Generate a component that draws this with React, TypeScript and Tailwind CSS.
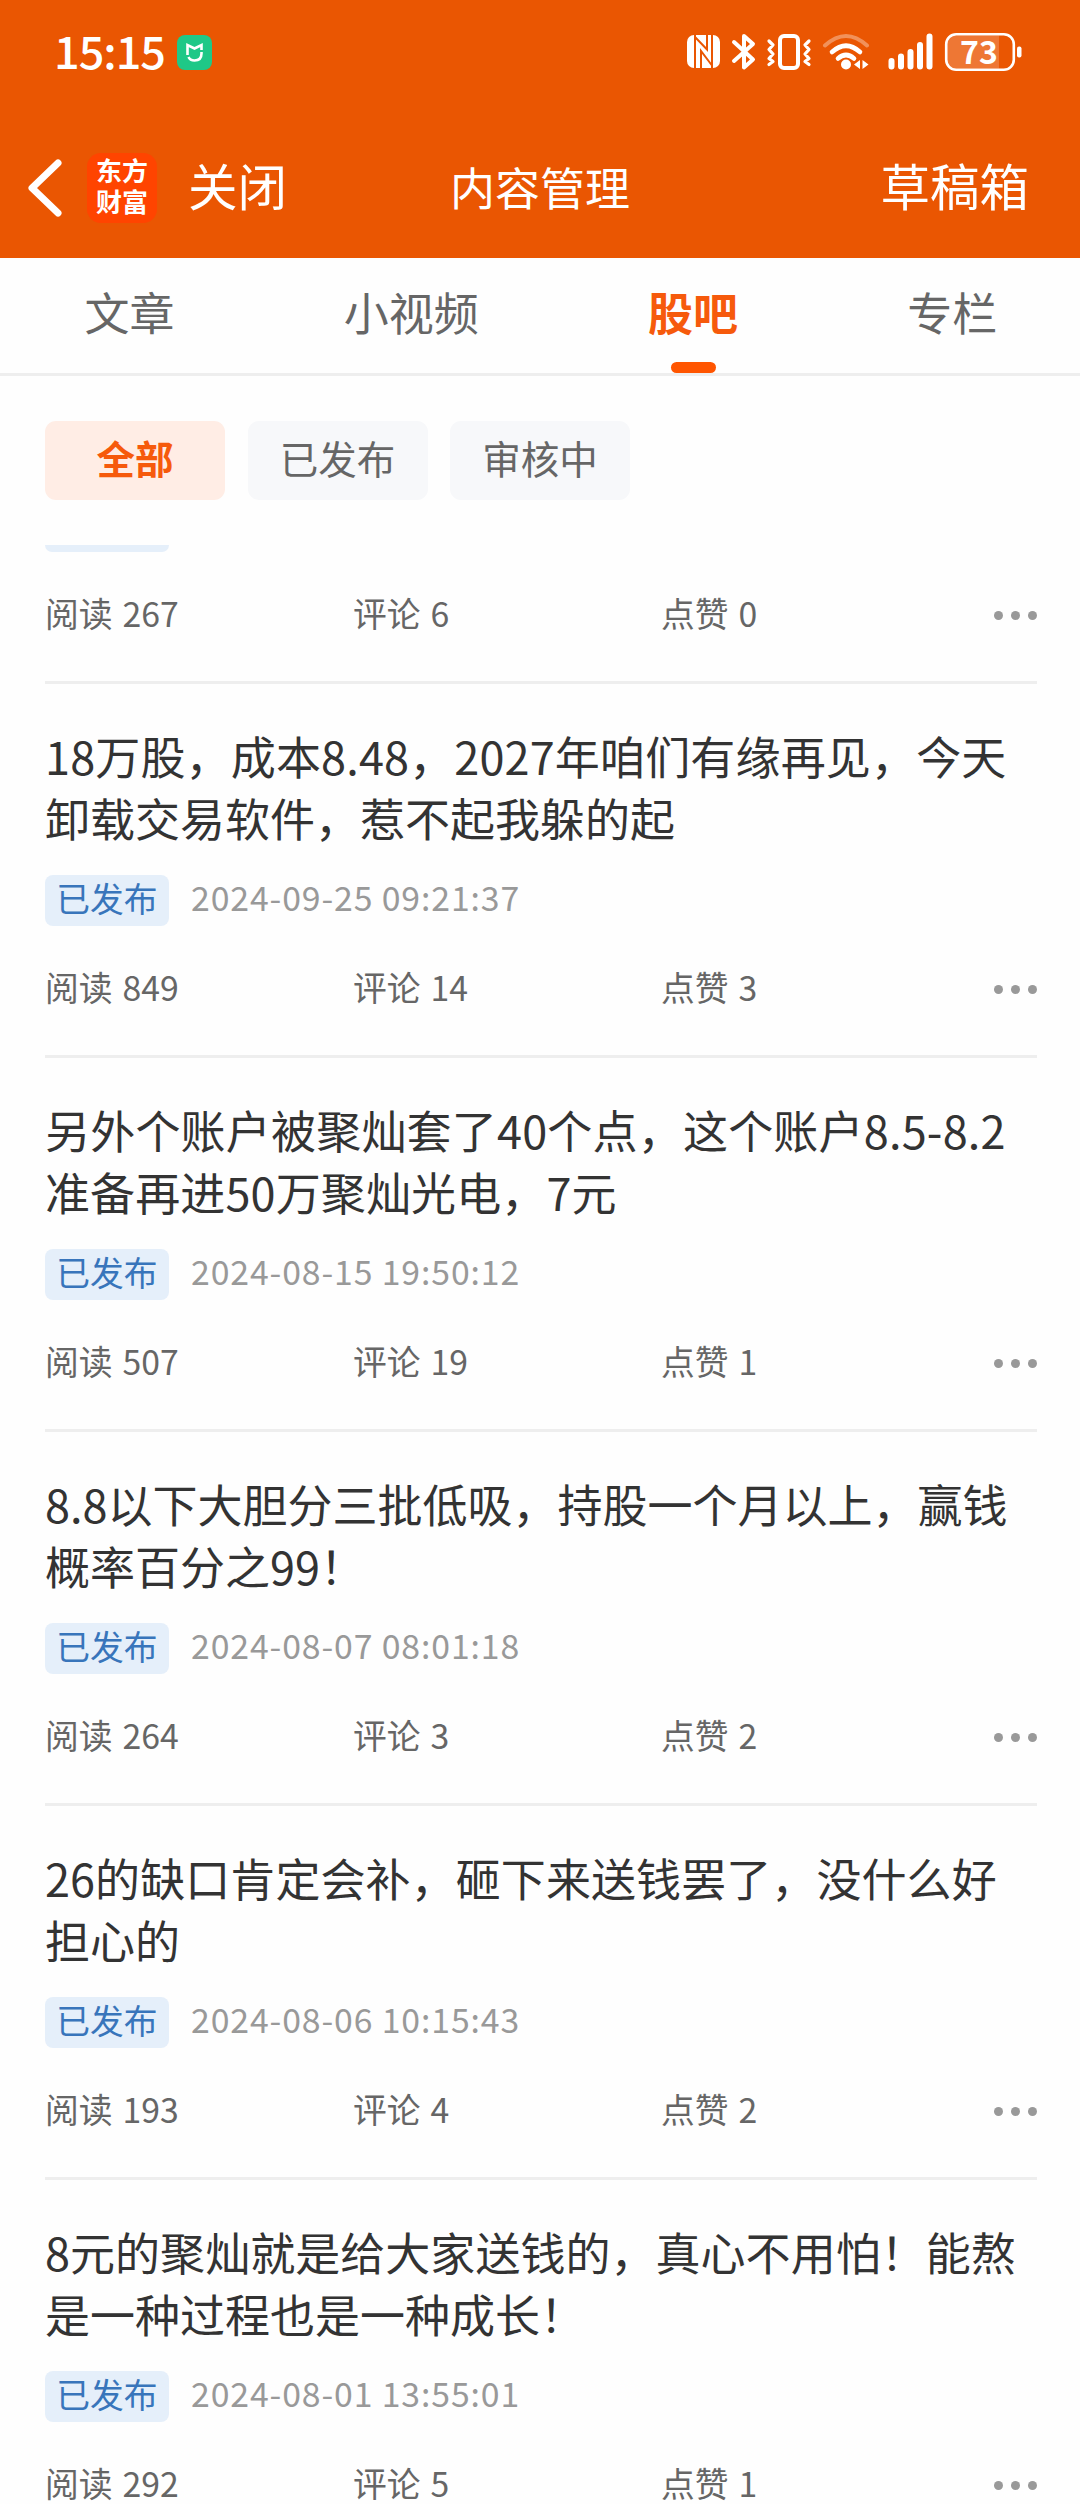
import clsx from 'clsx';

type Post = {
  id: number;
  lines: { text: string; className?: string }[];
  date: string;
  reads: number;
  comments: number;
  likes: number;
};

const TABS = ['文章', '小视频', '股吧', '专栏'];
const FILTERS = ['全部', '已发布', '审核中'];

const POSTS: Post[] = [
  {
    id: 1,
    lines: [
      {
        text: '18万股，成本8.48，2027年咱们有缘再见，今天',
        className: 'tracking-[0.16px]',
      },
      { text: '卸载交易软件，惹不起我躲的起' },
    ],
    date: '2024-09-25 09:21:37',
    reads: 849,
    comments: 14,
    likes: 3,
  },
  {
    id: 2,
    lines: [
      {
        text: '另外个账户被聚灿套了40个点，这个账户8.5-8.2',
        className: 'tracking-[0.2px]',
      },
      { text: '准备再进50万聚灿光电，7元', className: 'tracking-[0.12px]' },
    ],
    date: '2024-08-15 19:50:12',
    reads: 507,
    comments: 19,
    likes: 1,
  },
  {
    id: 3,
    lines: [
      { text: '8.8以下大胆分三批低吸，持股一个月以上，赢钱' },
      { text: '概率百分之99！' },
    ],
    date: '2024-08-07 08:01:18',
    reads: 264,
    comments: 3,
    likes: 2,
  },
  {
    id: 4,
    lines: [
      {
        text: '26的缺口肯定会补，砸下来送钱罢了，没什么好',
        className: 'tracking-[0.08px]',
      },
      { text: '担心的' },
    ],
    date: '2024-08-06 10:15:43',
    reads: 193,
    comments: 4,
    likes: 2,
  },
  {
    id: 5,
    lines: [
      {
        text: '8元的聚灿就是给大家送钱的，真心不用怕！能熬',
        className: 'tracking-[0.04px]',
      },
      { text: '是一种过程也是一种成长！' },
    ],
    date: '2024-08-01 13:55:01',
    reads: 292,
    comments: 5,
    likes: 1,
  },
];

const StatusIcons = () => (
  <svg width="336" height="40" viewBox="0 0 336 40" fill="none">
    {/* nfc */}
    <rect x="0" y="3" width="33" height="33" rx="7" fill="#fff" />
    <path
      d="M8 3v33M25 3v33M8 5l12 12.500V3M14 36V19l11 14.500"
      stroke="#ea5602"
      strokeWidth="2"
    />
    {/* bluetooth */}
    <path
      d="M47 10l19 17.500-9 8V4l9 8L47 29"
      stroke="#fff"
      strokeWidth="4"
      strokeLinejoin="round"
      strokeLinecap="round"
    />
    {/* vibrate */}
    <rect x="93" y="4" width="18" height="32" rx="4" stroke="#fff" strokeWidth="4" />
    <path
      d="M82 9l4 4-4 4.500 4 4.500-4 4.500 4 3-4 3M122 9l-4 4 4 4.500-4 4.500 4 4.500-4 3 4 3"
      stroke="#fff"
      strokeWidth="3.200"
      strokeLinejoin="round"
      strokeLinecap="round"
    />
    {/* wifi */}
    <path
      d="M138 13.500q21-19 42 0"
      stroke="#fff"
      strokeOpacity=".35"
      strokeWidth="4"
      strokeLinecap="round"
    />
    <path
      d="M145 20q14-12.500 28 0M151 26.500q8-7 16 0"
      stroke="#fff"
      strokeWidth="4.600"
      strokeLinecap="round"
    />
    <circle cx="159" cy="32.500" r="5" fill="#fff" />
    <path d="M173 28v9l-6-4.500zM175.500 28v9l6-4.500z" fill="#fff" />
    {/* signal */}
    <path
      d="M204.500 29v5.500M214 24.500v10M223.500 20v14.500M233 13v21.500M242.500 4.500v30"
      stroke="#fff"
      strokeWidth="6"
      strokeLinecap="round"
    />
    {/* battery */}
    <path d="M267 3.500h45v33h-45q-8 0-8-8v-17q0-8 8-8z" fill="#fff" fillOpacity=".2" />
    <rect
      x="259.200"
      y="2.200"
      width="67.600"
      height="35.600"
      rx="10"
      stroke="#fff"
      strokeWidth="2.600"
    />
    <rect x="330" y="14.500" width="4.500" height="11" rx="2" fill="#fff" />
    <text
      x="292"
      y="31.500"
      fill="#fff"
      fontSize="32"
      fontWeight="700"
      textAnchor="middle"
      fontFamily="Noto Sans CJK SC, sans-serif"
    >
      73
    </text>
  </svg>
);

const Header = () => (
  <header className="bg-[#ea5602] h-[258px] text-white">
    <div className="h-[104px] flex items-center pl-[54px] pr-[57px]">
      <span className="pb-[5px] text-[45px] leading-none font-medium tracking-[-1px]">15:15</span>
      <svg width="35" height="35" viewBox="0 0 35 35" className="ml-[12px]" fill="none">
        <rect width="35" height="35" rx="8" fill="#1fc887" />
        <path
          d="M10.500 20V10l7 3.500 7-3.500v5M24.500 17v1.500q0 7-7 7-4.500 0-6-3.500"
          stroke="#fff"
          strokeWidth="2.600"
        />
      </svg>
      <div className="ml-auto">
        <StatusIcons />
      </div>
    </div>
    <div className="h-[168px] grid grid-cols-3 items-center px-[28px]">
      <div className="flex items-center">
        <svg width="34" height="58" viewBox="0 0 34 58" fill="none">
          <path
            d="M30 4L4 29l26 25"
            stroke="#fff"
            strokeWidth="7"
            strokeLinecap="round"
            strokeLinejoin="round"
          />
        </svg>
        <div className="ml-[25px] pb-[7px] w-[70px] h-[70px] rounded-[14px] bg-[#ff4400] flex flex-col items-center justify-center text-[26px] leading-[31px] font-bold">
          <span>东方</span>
          <span>财富</span>
        </div>
        <span className="ml-[31px] pb-[6px] text-[49.5px] leading-none">关闭</span>
      </div>
      <h1 className="pb-[4px] text-[45px] leading-none text-center">内容管理</h1>
      <span className="pr-[23px] pb-[6px] text-[49.5px] leading-none text-right">草稿箱</span>
    </div>
  </header>
);

const Stats = ({ reads, comments, likes }: Pick<Post, 'reads' | 'comments' | 'likes'>) => (
  <div className="flex items-center h-[50px] pt-px text-[33.75px] leading-[50px] [word-spacing:2.5px] text-[#666]">
    <span className="w-[308px] pb-[3px]">阅读 {reads}</span>
    <span className="w-[308px] pb-[3px]">评论 {comments}</span>
    <span className="pb-[3px]">点赞 {likes}</span>
    <div className="ml-auto pt-[2px] flex gap-2">
      <i className="w-[9px] h-[9px] rounded-full bg-[#999]" />
      <i className="w-[9px] h-[9px] rounded-full bg-[#999]" />
      <i className="w-[9px] h-[9px] rounded-full bg-[#999]" />
    </div>
  </div>
);

const PostItem = ({ post }: { post: Post }) => (
  <article className="h-[374px] border-t-[3px] border-[#eee] pt-[41px]">
    <h2 className="text-[45px] leading-[62px] text-[#333]">
      {post.lines.map((line) => (
        <span key={line.text} className={clsx('block whitespace-nowrap', line.className)}>
          {line.text}
        </span>
      ))}
    </h2>
    <div className="mt-[26px] flex items-center">
      <span className="w-[124px] h-[51px] rounded-lg bg-[#e5effa] text-[#3875bb] text-[33.75px] leading-[45px] text-center">
        已发布
      </span>
      <time className="ml-[22px] pb-[8px] text-[33.75px] leading-[43px] tracking-[0.9px] text-[#999]">
        {post.date}
      </time>
    </div>
    <div className="mt-[37px]">
      <Stats reads={post.reads} comments={post.comments} likes={post.likes} />
    </div>
  </article>
);

const App = () => {
  return (
    <div className="w-[1080px] h-[2504px] overflow-hidden bg-[#fefefe] font-['Noto_Sans_CJK_SC',sans-serif]">
      <Header />
      <nav className="h-[118px] -mr-[2px] flex justify-around border-b-[3px] border-[#eee]">
        {TABS.map((tab) => (
          <div
            key={tab}
            className={clsx(
              'flex flex-col items-center justify-between pt-[23px] text-[45px] leading-[62px]',
              tab === '股吧' ? 'text-[#f65a0c] font-bold' : 'text-[#666]'
            )}
          >
            {tab}
            {tab === '股吧' && <div className="w-[45px] h-[11px] rounded-full bg-[#ff5500]" />}
          </div>
        ))}
      </nav>
      <div className="flex gap-[22.500px] px-[45px] pt-[45px]">
        {FILTERS.map((filter) => (
          <button
            key={filter}
            className={clsx(
              'w-[180px] h-[79px] rounded-[11px] text-[38.5px] leading-[72px] pb-[7px]',
              filter === '全部'
                ? 'bg-[#ffede5] text-[#f65a0c] font-bold'
                : 'bg-[#f7f8fa] text-[#666]'
            )}
          >
            {filter}
          </button>
        ))}
      </div>
      <main className="mt-[45px] ml-[45px] w-[992px]">
        {/* badge of the post scrolled under the filters */}
        <div className="w-[124px] h-[7px] rounded-b-lg bg-[#e5effa]" />
        <div className="pt-[37px] h-[129px]">
          <Stats reads={267} comments={6} likes={0} />
        </div>
        {POSTS.map((post) => (
          <PostItem key={post.id} post={post} />
        ))}
      </main>
    </div>
  );
};

export default App;
